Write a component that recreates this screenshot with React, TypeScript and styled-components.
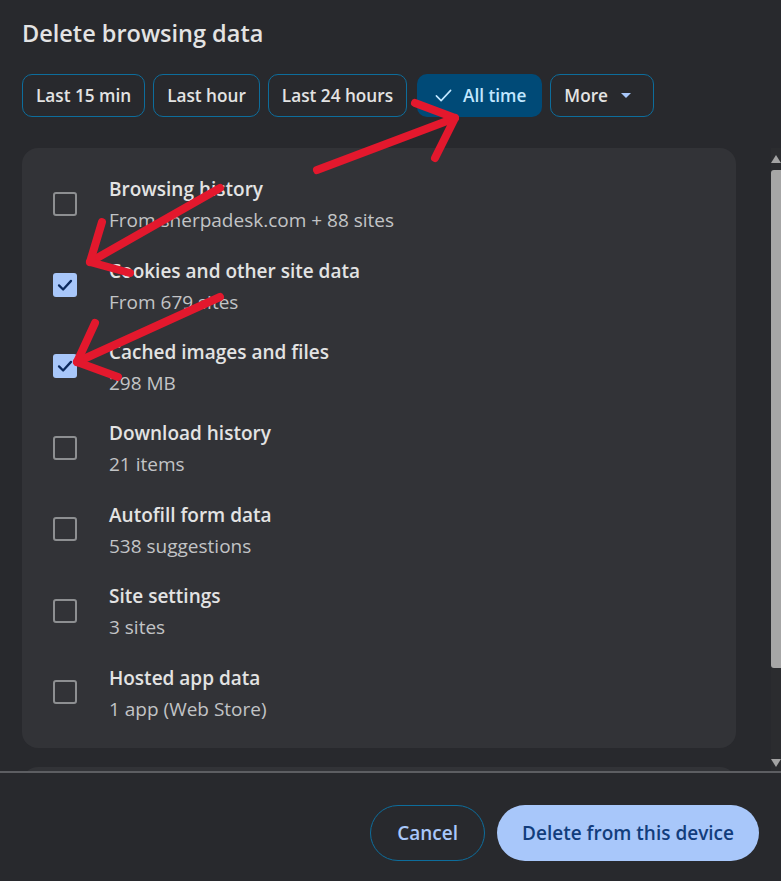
import React from "react";
import styled, { createGlobalStyle } from "styled-components";

const Global = createGlobalStyle`
  html, body { margin: 0; padding: 0; background: #28292d; }
  body { font-family: "Open Sans", "Noto Sans", sans-serif; -webkit-font-smoothing: antialiased; }
`;

const Dialog = styled.div`
  position: relative;
  width: 781px;
  height: 881px;
  background: #28292d;
  display: flex;
  flex-direction: column;
  overflow: hidden;
`;

const Title = styled.h1`
  margin: 0;
  padding: 17px 22px 0;
  font-size: 23.5px;
  line-height: 32px;
  font-weight: 600;
  color: #e3e3e3;
`;

const ChipRow = styled.div`
  display: flex;
  gap: 8px;
  padding: 25px 22px 0;
`;

const Chip = styled.button<{ $selected?: boolean; $menu?: boolean }>`
  height: 43px;
  box-sizing: border-box;
  display: flex;
  align-items: center;
  gap: ${(p) => (p.$selected ? 10 : 9)}px;
  margin-left: ${(p) => (p.$selected ? 2 : 0)}px;
  padding: 0 ${(p) => (p.$menu ? 22 : p.$selected ? 16 : 13)}px 0 ${(p) => (p.$selected ? 17 : 13)}px;
  border-radius: 10px;
  border: ${(p) => (p.$selected ? "none" : "1.5px solid #0d6d9c")};
  background: ${(p) => (p.$selected ? "#004a77" : "transparent")};
  color: ${(p) => (p.$selected ? "#c2e7ff" : "#e3e3e3")};
  font-family: inherit;
  font-size: 17.2px;
  font-weight: 600;
  cursor: pointer;
`;

const Caret = styled.span`
  width: 0;
  height: 0;
  margin-left: 4px;
  border-left: 5px solid transparent;
  border-right: 5px solid transparent;
  border-top: 5px solid #a8c7fa;
`;

const ScrollArea = styled.div`
  margin-top: 31px;
  flex: 1;
  min-height: 0;
  display: flex;
`;

const ScrollContent = styled.div`
  flex: 1;
  overflow: hidden;
  padding: 0 35px 0 22px;
  display: flex;
  flex-direction: column;
  gap: 19px;
`;

const Card = styled.div<{ $peek?: boolean }>`
  flex-shrink: 0;
  background: #323337;
  border-radius: 16px;
  padding: ${(p) => (p.$peek ? "0" : "15px 0")};
  height: ${(p) => (p.$peek ? "60px" : "auto")};
  box-sizing: border-box;
`;

const Row = styled.div`
  height: 81.4px;
  display: flex;
  align-items: center;
  padding-left: 31px;
  gap: 32px;
`;

const Box = styled.span<{ $checked?: boolean }>`
  width: 24px;
  height: 24px;
  box-sizing: border-box;
  flex-shrink: 0;
  border-radius: 3px;
  border: ${(p) => (p.$checked ? "none" : "2px solid #8d8f91")};
  background: ${(p) => (p.$checked ? "#a8c7fa" : "transparent")};
  display: flex;
  align-items: center;
  justify-content: center;
`;

const Texts = styled.div`
  display: flex;
  flex-direction: column;
  gap: 4px;
  padding-top: 3px;
`;

const RowTitle = styled.div`
  font-size: 19px;
  line-height: 27px;
  font-weight: 600;
  color: #e3e3e3;
`;

const RowSub = styled.div`
  font-size: 19px;
  line-height: 27px;
  font-weight: 400;
  color: #c2c4c6;
`;

const Scrollbar = styled.div`
  width: 10px;
  display: flex;
  flex-direction: column;
  align-items: center;
  background: #2b2c2f;
  padding-top: 7px;
  box-sizing: border-box;
`;

const ArrowUp = styled.span`
  width: 0;
  height: 0;
  border-left: 5px solid transparent;
  border-right: 5px solid transparent;
  border-bottom: 8px solid #a3a3a3;
`;

const ArrowDown = styled.span`
  width: 0;
  height: 0;
  margin-top: auto;
  margin-bottom: 4px;
  border-left: 5px solid transparent;
  border-right: 5px solid transparent;
  border-top: 8px solid #a3a3a3;
`;

const Thumb = styled.span`
  margin-top: 7px;
  width: 10px;
  height: 498px;
  background: #a6a6a6;
  border-radius: 3px 0 0 3px;
`;

const Divider = styled.div`
  height: 2px;
  background: #5d5e62;
  flex-shrink: 0;
`;

const Footer = styled.div`
  height: 108px;
  flex-shrink: 0;
  display: flex;
  justify-content: flex-end;
  align-items: flex-start;
  gap: 12px;
  padding: 32px 22px 0;
  box-sizing: border-box;
`;

const PillButton = styled.button<{ $primary?: boolean }>`
  height: 56px;
  box-sizing: border-box;
  padding: 0 ${(p) => (p.$primary ? 25 : 26)}px;
  border-radius: 28px;
  border: ${(p) => (p.$primary ? "none" : "1.5px solid #0d6d9c")};
  background: ${(p) => (p.$primary ? "#a8c7fa" : "transparent")};
  color: ${(p) => (p.$primary ? "#123d7c" : "#a8c7fa")};
  font-family: inherit;
  font-size: 19px;
  font-weight: 600;
  cursor: pointer;
`;

const Annotations = styled.svg`
  position: absolute;
  left: 0;
  top: 0;
  pointer-events: none;
`;

const items = [
  { title: "Browsing history", sub: "From sherpadesk.com + 88 sites", checked: false },
  { title: "Cookies and other site data", sub: "From 679 sites", checked: true },
  { title: "Cached images and files", sub: "298 MB", checked: true },
  { title: "Download history", sub: "21 items", checked: false },
  { title: "Autofill form data", sub: "538 suggestions", checked: false },
  { title: "Site settings", sub: "3 sites", checked: false },
  { title: "Hosted app data", sub: "1 app (Web Store)", checked: false },
];

const chips = ["Last 15 min", "Last hour", "Last 24 hours"];

const Check = ({ color, size }: { color: string; size: number }) => (
  <svg width={size} height={size} viewBox="0 0 24 24" fill="none">
    <path d="M4 12.5 L9.5 18 L20 6.5" stroke={color} strokeWidth={3} strokeLinecap="round" strokeLinejoin="round" />
  </svg>
);

export default function App() {
  return (
    <>
      <Global />
      <Dialog>
        <Title>Delete browsing data</Title>
        <ChipRow>
          {chips.map((c) => (
            <Chip key={c}>{c}</Chip>
          ))}
          <Chip $selected>
            <svg width="19" height="19" viewBox="0 0 24 24" fill="none">
              <path d="M3 12.5 L9 18.5 L21 5.5" stroke="#c2e7ff" strokeWidth={2} strokeLinecap="round" strokeLinejoin="round" />
            </svg>
            All time
          </Chip>
          <Chip $menu>
            More
            <Caret />
          </Chip>
        </ChipRow>
        <ScrollArea>
          <ScrollContent>
            <Card>
              {items.map((it) => (
                <Row key={it.title}>
                  <Box $checked={it.checked}>{it.checked && <Check color="#0b2a5e" size={18} />}</Box>
                  <Texts>
                    <RowTitle>{it.title}</RowTitle>
                    <RowSub>{it.sub}</RowSub>
                  </Texts>
                </Row>
              ))}
            </Card>
            <Card $peek />
          </ScrollContent>
          <Scrollbar>
            <ArrowUp />
            <Thumb />
            <ArrowDown />
          </Scrollbar>
        </ScrollArea>
        <Divider />
        <Footer>
          <PillButton>Cancel</PillButton>
          <PillButton $primary>Delete from this device</PillButton>
        </Footer>
        <Annotations width="781" height="881" viewBox="0 0 781 881">
          <g stroke="#e3182d" strokeWidth="8" strokeLinecap="round" strokeLinejoin="round" fill="none">
            <path d="M317 170 L455 118" />
            <path d="M415 103 L455 118 L435 158" />
            <path d="M220 188 L90 262" />
            <path d="M102 222 L90 262 L130 273" />
            <path d="M220 297 L77 362" />
            <path d="M95 323 L77 362 L118 377" />
          </g>
        </Annotations>
      </Dialog>
    </>
  );
}
